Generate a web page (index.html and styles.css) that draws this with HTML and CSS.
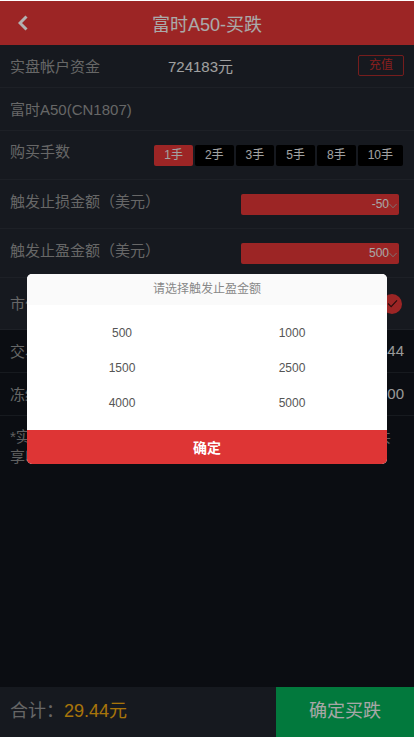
FILE: index.html
```html
<!DOCTYPE html>
<html lang="zh-CN">
<head>
<meta charset="utf-8">
<title>富时A50-买跌</title>
<link rel="stylesheet" href="styles.css">
</head>
<body>
<div class="page">
  <header class="topbar">
    <a class="back" href="#"><svg width="10" height="16" viewBox="0 0 10 16"><path d="M8.5 1.5 2 8l6.5 6.5" fill="none" stroke="currentColor" stroke-width="3"/></svg></a>
    <h1 class="title">富时A50-买跌</h1>
  </header>
  <section class="form">
    <div class="row row-s">
      <span class="label">实盘帐户资金</span>
      <span class="balance">724183元</span>
      <a class="recharge" href="#">充值</a>
    </div>
    <div class="row row-s"><span class="label">富时A50(CN1807)</span></div>
    <div class="row row-m">
      <span class="label label-lots">购买手数</span>
      <div class="lots">
        <span class="lot lot-on">1手</span><span class="lot">2手</span><span class="lot">3手</span><span class="lot">5手</span><span class="lot">8手</span><span class="lot">10手</span>
      </div>
    </div>
    <div class="row row-m">
      <span class="label label-up">触发止损金额（美元）</span>
      <div class="select"><span>-50</span><svg width="8" height="6" viewBox="0 0 9 6"><path d="M.5.8 4.5 5 8.5.8" fill="none" stroke="currentColor"/></svg></div>
    </div>
    <div class="row row-m">
      <span class="label label-up">触发止盈金额（美元）</span>
      <div class="select"><span>500</span><svg width="8" height="6" viewBox="0 0 9 6"><path d="M.5.8 4.5 5 8.5.8" fill="none" stroke="currentColor"/></svg></div>
    </div>
    <div class="row row-l">
      <span class="label">市价成交</span>
      <span class="check"><svg width="11" height="9" viewBox="0 0 12 10"><path d="M1 5l3.5 3.5L11 1.5" fill="none" stroke="#3a1212" stroke-width="1.3"/></svg></span>
    </div>
  </section>
  <section class="form-dark">
    <div class="row row-s"><span class="label">交易综合费</span><span class="amount">29.44</span></div>
    <div class="row row-s"><span class="label">冻结保证金</span><span class="amount">500.00</span></div>
    <p class="note">*实盘资金账户仅用于交易结算，盈利部分由平台与用户共享收益。</p>
  </section>
  <footer class="bottombar">
    <div class="total">合计：<em>29.44元</em></div>
    <a class="submit" href="#">确定买跌</a>
  </footer>
  <div class="overlay"></div>
  <div class="modal">
    <div class="modal-head">请选择触发止盈金额</div>
    <div class="options">
      <span>500</span><span>1000</span><span>1500</span><span>2500</span><span>4000</span><span>5000</span>
    </div>
    <button class="confirm" type="button">确定</button>
  </div>
</div>
</body>
</html>
```

FILE: styles.css
```css
* { box-sizing: border-box; margin: 0; padding: 0; }
html, body { height: 100%; background: #fff; overflow: hidden; }
body { padding: 1px 0; font-family: "Liberation Sans", "Noto Sans CJK SC", sans-serif; }
a { text-decoration: none; color: inherit; }

.page { position: relative; display: flex; flex-direction: column; height: 736px; background: #10141b; overflow: hidden; }

.topbar { position: relative; flex: none; height: 44px; display: flex; align-items: center; justify-content: center; background: #e03636; color: #fff; }
.back { position: absolute; left: 18px; top: 14px; display: flex; color: #fff; }
.title { font-size: 18px; font-weight: normal; color: #f4f4f4; }

.form { flex: none; background: #20252d; }
.row { display: flex; align-items: center; justify-content: space-between; padding: 0 10px; border-bottom: 1px solid #2a2f37; font-size: 15px; }
.row-s { height: 43px; }
.row-m { height: 49px; }
.row-l { height: 52px; }
.form-dark .row { border-bottom-color: #22262d; }
.label { color: #949494; margin-bottom: 2px; }
.label-lots { margin-bottom: 9px; }
.label-up { margin-bottom: 7px; }
.balance { position: absolute; left: 168px; margin-bottom: 2px; color: #e6e6e6; }
.recharge { width: 46px; height: 21px; margin-top: -1px; border: 1px solid #a82a2a; border-radius: 2px; color: #c22c2c; font-size: 12px; line-height: 19px; text-align: center; }

.lots { display: flex; gap: 2px; margin-right: 1px; }
.lot { height: 21px; padding: 0 10px; border-radius: 2px; background: #000; color: #e8e8e8; font-size: 12px; line-height: 21px; }
.lot-on { background: #e03636; }

.select { display: flex; align-items: center; justify-content: flex-end; width: 158px; height: 21px; margin-right: 5px; padding-right: 2px; border-radius: 2px; background: #e03636; color: #f0f0f0; font-size: 12px; }
.select svg { margin-top: 4px; color: #b0b0b0; }

.check { display: flex; align-items: center; justify-content: center; width: 20px; height: 20px; margin-right: 2px; border-radius: 50%; background: #e03636; }

.form-dark { flex: 1; }
.amount { color: #dcdcdc; margin-bottom: 2px; }
.note { padding: 11px 10px; color: #8a8a8a; font-size: 15px; line-height: 20px; }

.bottombar { flex: none; height: 50px; display: flex; align-items: stretch; background: #20252d; }
.total { flex: 1; padding-left: 10px; color: #929292; font-size: 18px; line-height: 48px; }
.total em { font-style: normal; color: #f0a80f; }
.submit { width: 138px; background: #03ae58; color: #f0f0f0; font-size: 18px; line-height: 48px; text-align: center; }

.overlay { position: absolute; inset: 0; background: rgba(0, 0, 0, .3); }
.modal { position: absolute; left: 27px; top: 273px; width: 360px; height: 190px; display: flex; flex-direction: column; border-radius: 5px; background: #fff; overflow: hidden; }
.modal-head { flex: none; height: 31px; background: #fafafa; color: #888; font-size: 12px; line-height: 30px; text-align: center; }
.options { flex: 1; display: grid; grid-template-columns: 1fr 1fr; grid-auto-rows: 35px; padding: 10px 10px 0; align-items: center; color: #555; font-size: 12px; text-align: center; }
.confirm { flex: none; height: 34px; border: 0; background: #de3535; color: #fff; font: bold 14px "Liberation Sans", "Noto Sans CJK SC", sans-serif; }
```
